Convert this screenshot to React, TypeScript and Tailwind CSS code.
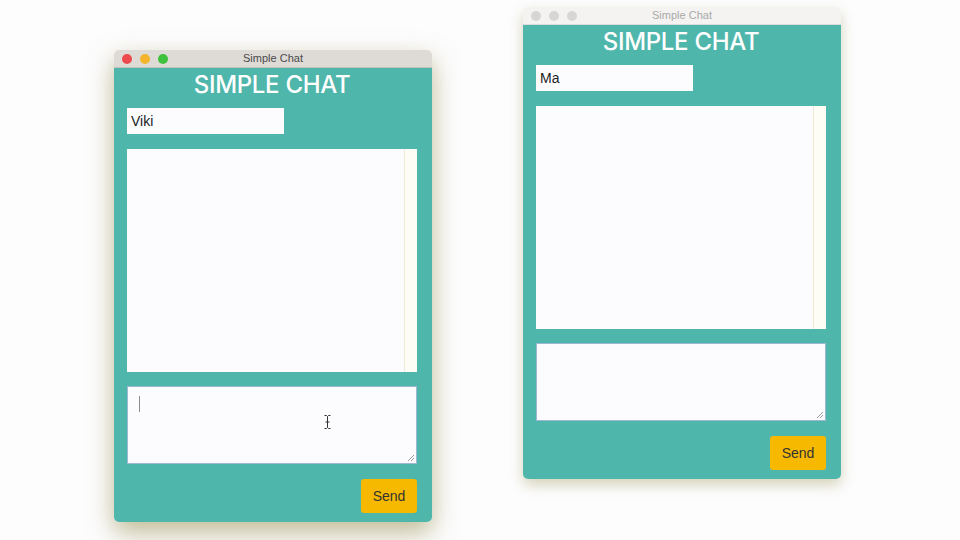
import React from "react";

type WinProps = {
  left: number;
  top: number;
  name: string;
  active: boolean;
  caret?: boolean;
};

function Grip() {
  return (
    <svg className="absolute right-[1px] bottom-[1px]" width="8" height="8" viewBox="0 0 8 8">
      <path d="M7 1 L1 7 M7 4 L4 7" stroke="#9a9a9a" strokeWidth="1" fill="none" />
    </svg>
  );
}

function ChatWindow({ left, top, name, active, caret }: WinProps) {
  return (
    <div
      className={`absolute w-[318px] rounded-[5px] overflow-hidden ${
        active
          ? "shadow-[0_10px_26px_rgba(130,120,40,0.5)]"
          : "shadow-[0_6px_14px_rgba(130,120,40,0.32)]"
      }`}
      style={{ left, top }}
    >
      {/* title bar */}
      <div
        className={`relative h-[18px] flex items-center justify-center border-b ${
          active ? "bg-[#dedad6] border-[#c4c0bc]" : "bg-[#f4f3f2] border-[#dcdcdc]"
        }`}
      >
        <div className="absolute left-[8px] top-[4px] flex gap-[8px]">
          <span className={`w-[10px] h-[10px] rounded-full ${active ? "bg-[#ee4a4e]" : "bg-[#d8d6d4]"}`} />
          <span className={`w-[10px] h-[10px] rounded-full ${active ? "bg-[#f4b42c]" : "bg-[#d8d6d4]"}`} />
          <span className={`w-[10px] h-[10px] rounded-full ${active ? "bg-[#3ec23e]" : "bg-[#d8d6d4]"}`} />
        </div>
        <span
          className={`text-[11px] leading-none ${active ? "text-[#4a4a4a]" : "text-[#a8a8a8]"}`}
          style={{ fontFamily: '"Liberation Sans", Arial, sans-serif' }}
        >
          Simple Chat
        </span>
      </div>

      {/* body */}
      <div
        className="bg-[#4fb6ab] pl-[13px] pr-[15px] pt-[1px] pb-[9px] flex flex-col"
        style={{ fontFamily: '"Liberation Sans", Arial, sans-serif' }}
      >
        <h1
          className="text-center text-white text-[24px] font-medium leading-[32px] tracking-[-0.3px] h-[36px]"
          style={{ fontFamily: "Inter, 'Liberation Sans', sans-serif" }}
        >
          SIMPLE CHAT
        </h1>
        <div className="mt-[3px] w-[157px] h-[26px] bg-[#fcfcfe] flex items-center pl-[4px] text-[14px] text-[#222]">
          {name}
        </div>
        <div className="mt-[15px] h-[223px] bg-[#fcfcfe] flex">
          <div className="flex-1" />
          <div className="w-[13px] border-l border-[#ecebd8] bg-[#fdfdf6]" />
        </div>
        <div className="relative mt-[14px] h-[78px] bg-[#fcfcfe] border border-[#9fb7d4]">
          {caret && <span className="absolute left-[11px] top-[9px] w-[1px] h-[16px] bg-[#8c8c8c]" />}
          {caret && (
            <svg className="absolute left-[196px] top-[28px]" width="7" height="14" viewBox="0 0 7 14">
              <path d="M0.5 0.5 H2.5 L3.5 1.5 L4.5 0.5 H6.5 M3.5 1.5 V12.5 M0.5 13.5 H2.5 L3.5 12.5 L4.5 13.5 H6.5 M1.5 7 H5.5" stroke="#333" strokeWidth="1" fill="none" />
            </svg>
          )}
          <Grip />
        </div>
        <div className="mt-[15px] flex justify-end">
          <button className="w-[56px] h-[34px] rounded-[3px] bg-[#f6b900] text-[#333] text-[14px]">
            Send
          </button>
        </div>
      </div>
    </div>
  );
}

export default function App() {
  return (
    <div className="relative w-[960px] h-[540px] bg-[#fdfdfe] overflow-hidden">
      <ChatWindow left={114} top={50} name="Viki" active caret />
      <ChatWindow left={523} top={7} name="Ma" active={false} />
    </div>
  );
}
